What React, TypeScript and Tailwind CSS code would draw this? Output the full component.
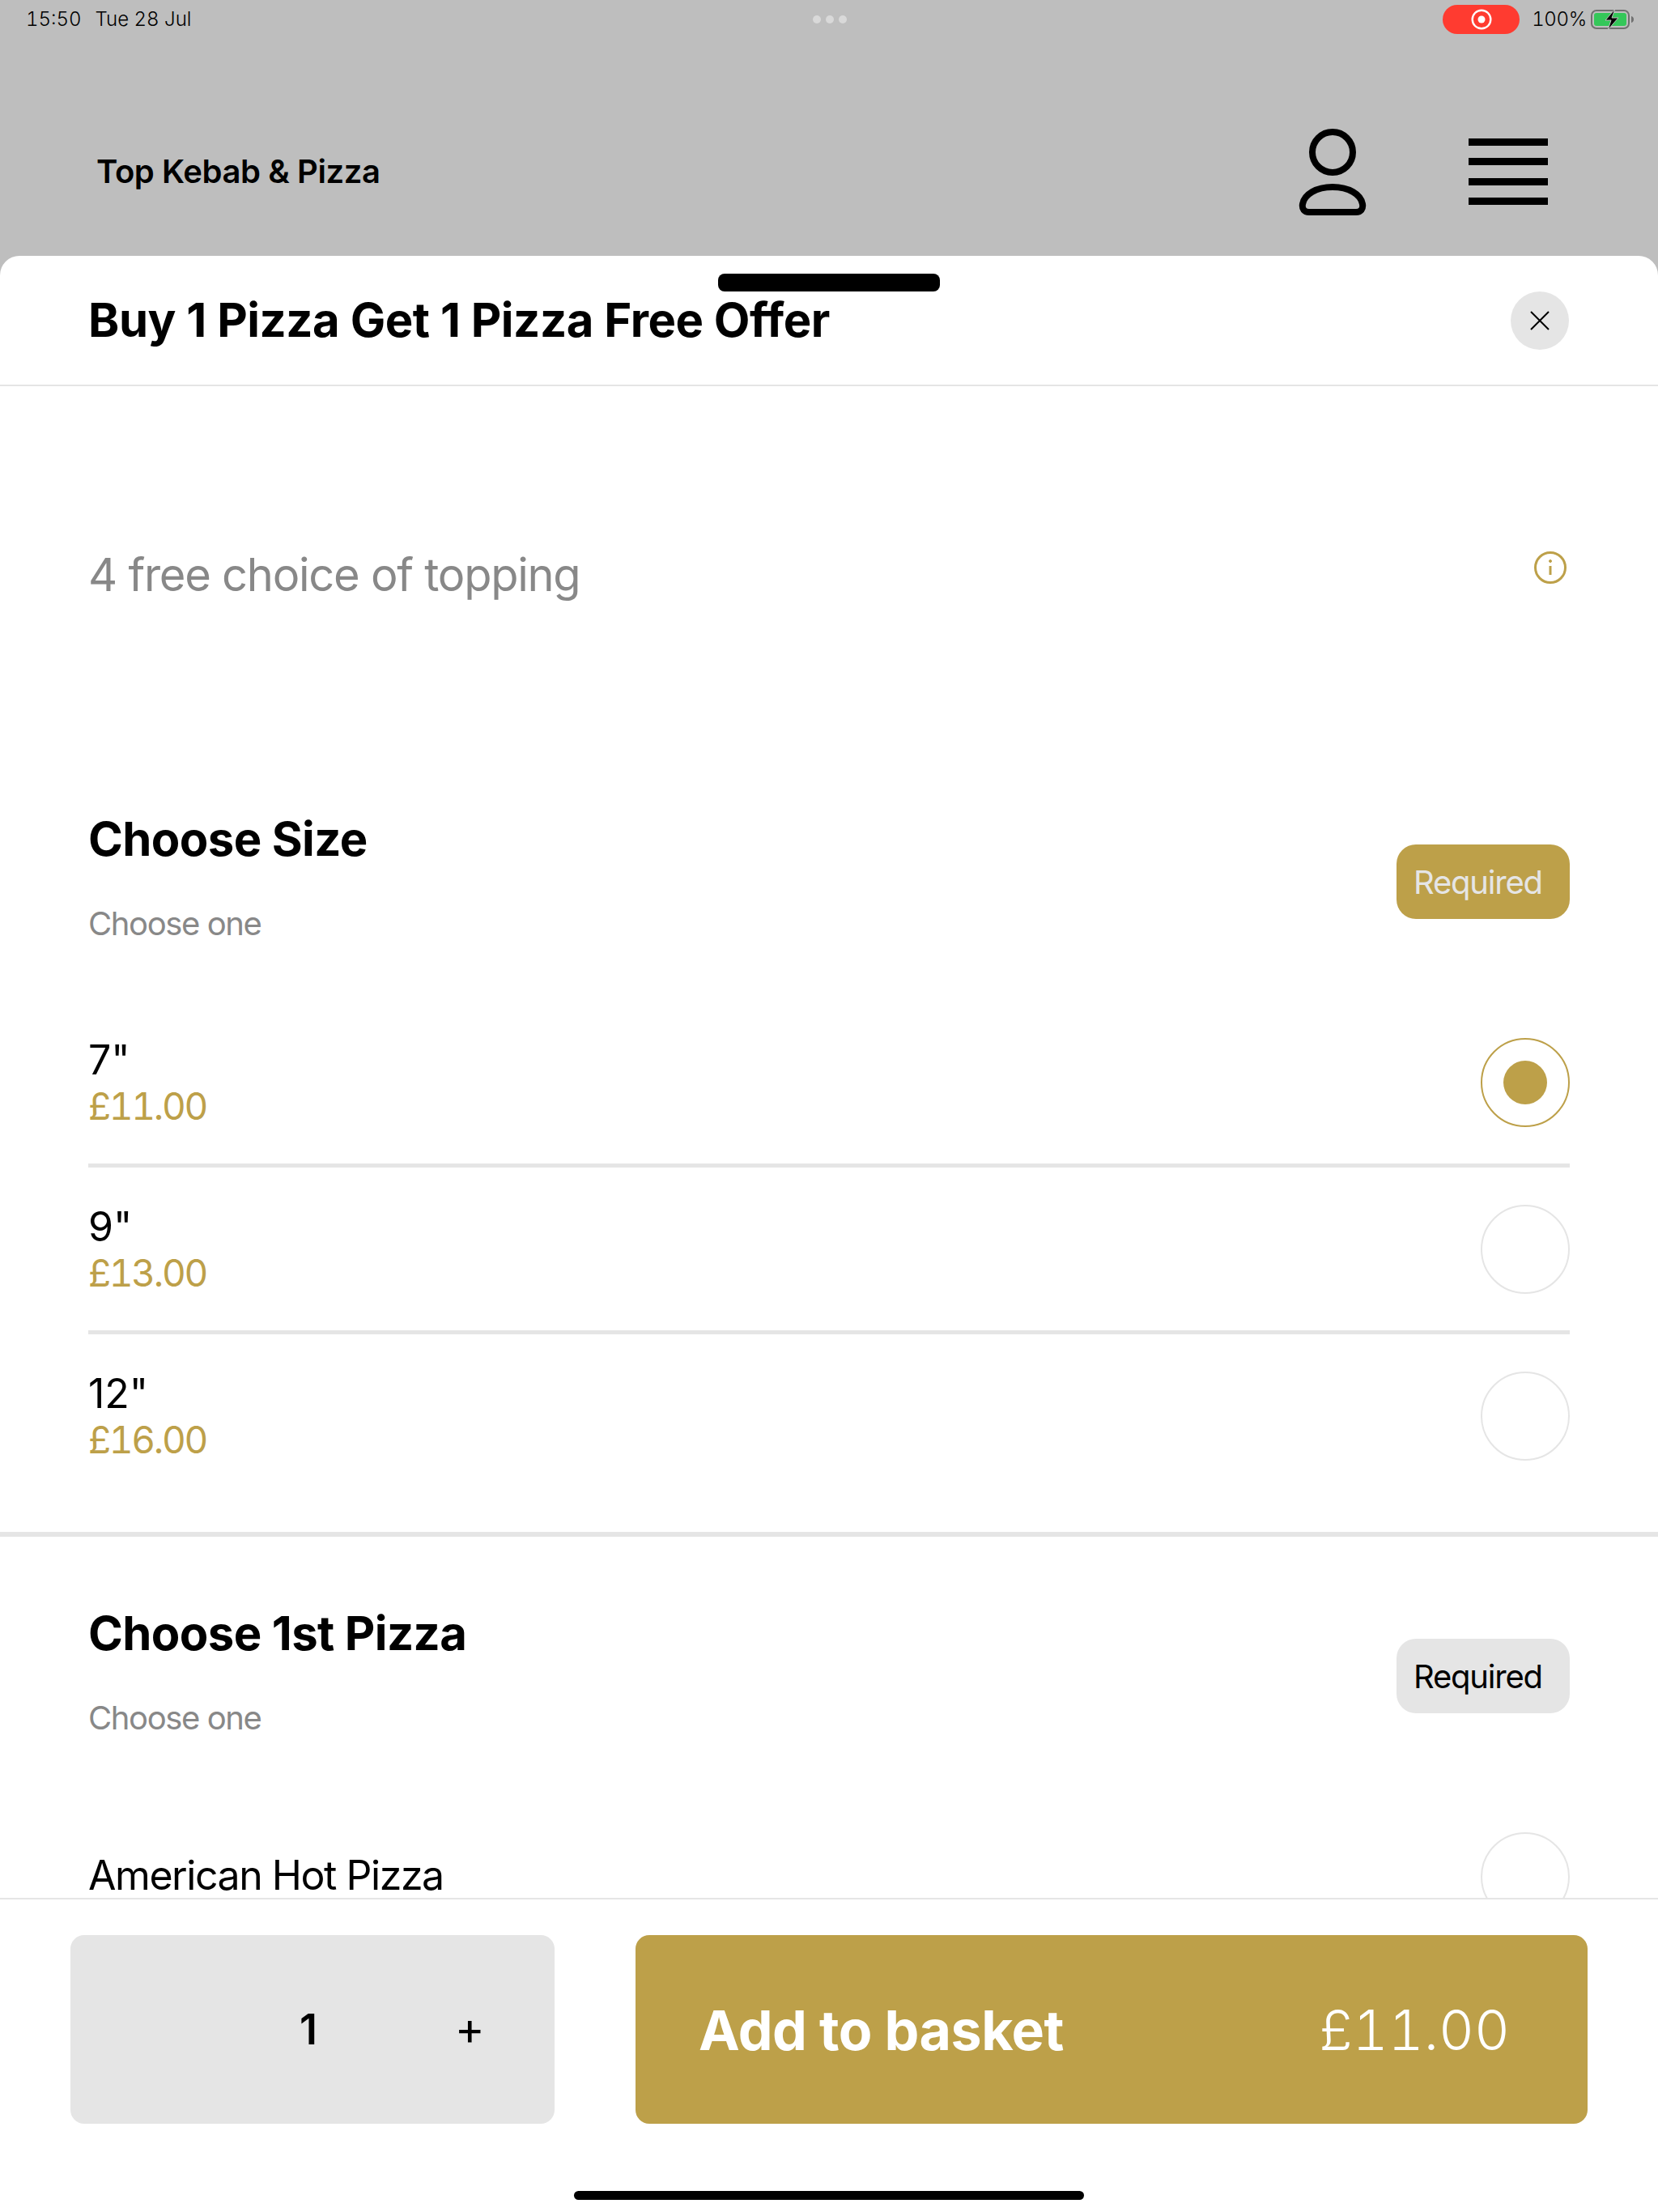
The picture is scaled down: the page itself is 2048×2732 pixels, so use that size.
import React from 'react';

const GOLD = '#bda049';

const StatusBar = () => (
  <div className="flex h-[48px] items-center pl-[32px] pr-[30px] text-[24px] font-light leading-[48px] text-black tabular-nums">
    <div className="flex flex-1 gap-[17px]">
      <span>15:50</span>
      <span>Tue 28 Jul</span>
    </div>
    <div className="flex gap-[6px]">
      <span className="h-[10px] w-[10px] rounded-full bg-[#d9d9d9]"></span>
      <span className="h-[10px] w-[10px] rounded-full bg-[#d9d9d9]"></span>
      <span className="h-[10px] w-[10px] rounded-full bg-[#d9d9d9]"></span>
    </div>
    <div className="flex flex-1 items-center justify-end">
      <div className="mr-[15px] flex h-[36px] w-[95px] items-center justify-center rounded-full bg-[#ff3b30]">
        <svg width="26" height="26" viewBox="0 0 26 26">
          <circle cx="13" cy="13" r="11.300" fill="none" stroke="#fff" strokeWidth="2.400" />
          <circle cx="13" cy="13" r="4.500" fill="#fff" />
        </svg>
      </div>
      <span className="mr-[5px] tracking-[-0.3px]">100%</span>
      <svg width="53" height="26" viewBox="0 0 53 26">
        <rect x="1" y="2" width="46" height="22" rx="6" fill="none" stroke="#707070" strokeWidth="2" />
        <rect x="4" y="5" width="40" height="16" rx="3" fill="#34c759" />
        <path d="M50 9c2 .5 3 2 3 4s-1 3.500-3 4z" fill="#707070" />
        <path d="M30 0 18 14h7l-4 12 13-15h-8z" fill="#000" stroke="#bebebe" strokeWidth="1" />
      </svg>
    </div>
  </div>
);

const ProfileIcon = () => (
  <svg width="84" height="107" viewBox="0 0 84 107" fill="none" stroke="#000" strokeWidth="8">
    <circle cx="42" cy="29" r="25" />
    <path d="M42 72c-20 0-35 9-37 21-1 6 2 10 8 10h58c6 0 9-4 8-10-2-12-17-21-37-21z" />
  </svg>
);

const MenuIcon = () => (
  <div className="flex w-[98px] flex-col gap-[15.500px]">
    <span className="h-[9px] bg-black"></span>
    <span className="h-[9px] bg-black"></span>
    <span className="h-[9px] bg-black"></span>
    <span className="h-[9px] bg-black"></span>
  </div>
);

const SectionHeader = ({ title, active }: { title: string; active: boolean }) => (
  <div className="flex items-start justify-between">
    <div>
      <h2 className="text-[58px] font-bold leading-[70px] tracking-[-0.6px] text-black">{title}</h2>
      <p className="mt-[45px] text-[40px] leading-[50px] tracking-[-1.4px] text-[#888888]">Choose one</p>
    </div>
    <span
      className={
        active
          ? 'mt-[42px] flex h-[92px] w-[214px] items-center pl-[21px] pt-[2px] text-[40px] tracking-[-1.2px] rounded-[24px] bg-[#bda049] text-[#e5e5e5]'
          : 'mt-[42px] flex h-[92px] w-[214px] items-center pl-[21px] pt-[2px] text-[40px] tracking-[-1.2px] rounded-[24px] bg-[#e5e5e5] text-black'
      }
    >
      Required
    </span>
  </div>
);

const Radio = ({ checked }: { checked?: boolean }) => (
  <span
    className={
      checked
        ? 'flex h-[110px] w-[110px] items-center justify-center rounded-full border-2 border-[#bda049]'
        : 'flex h-[110px] w-[110px] items-center justify-center rounded-full border-2 border-[#e5e5e5]'
    }
  >
    {checked && <span className="h-[54px] w-[54px] rounded-full bg-[#bda049]"></span>}
  </span>
);

const SizeRow = ({ label, price, checked, last }: { label: string; price: string; checked?: boolean; last?: boolean }) => (
  <div className={last ? 'flex h-[201px] items-center justify-between' : 'box-content flex h-[201px] items-center justify-between border-b-[5px] border-[#e5e5e5]'}>
    <div className="pt-[4px]">
      <div className="text-[50px] leading-[55px] text-black">{label}</div>
      <div className="text-[46px] leading-[58px] tracking-[-2.3px] text-[#bda049] tabular-nums">{price}</div>
    </div>
    <Radio checked={checked} />
  </div>
);

export default function App() {
  return (
    <div
      className="relative flex h-[2732px] w-[2048px] flex-col overflow-hidden bg-[#bebebe]"
      style={{ fontFamily: 'Inter, "Liberation Sans", sans-serif' }}
    >
      <div className="flex h-[316px] flex-col">
        <StatusBar />
        <div className="flex flex-1 items-center justify-between pl-[119px] pr-[136px] pt-[60px]">
          <span className="text-[40px] font-semibold tracking-[-0.4px] text-black">Top Kebab &amp; Pizza</span>
          <div className="flex items-center gap-[126px]">
            <ProfileIcon />
            <MenuIcon />
          </div>
        </div>
      </div>

      <div className="flex min-h-0 flex-1 flex-col rounded-t-[24px] bg-white">
        <div className="flex h-[161px] items-center justify-between border-b-2 border-[#e5e5e5] pl-[109px] pr-[110px]">
          <h1 className="-mt-[2px] text-[58px] font-bold leading-[70px] tracking-[-0.45px] text-black">Buy 1 Pizza Get 1 Pizza Free Offer</h1>
          <button className="flex h-[72px] w-[72px] items-center justify-center rounded-full bg-[#e5e5e5]">
            <svg width="24" height="24" viewBox="0 0 24 24" fill="none" stroke="#000" strokeWidth="2">
              <path d="M1 1l22 22M23 1 1 23" />
            </svg>
          </button>
        </div>

        <div className="min-h-0 flex-1 overflow-hidden">
          <div className="flex h-[440px] items-start justify-between pl-[109px] pr-[113px] pt-[198px]">
            <p className="text-[56px] leading-[70px] tracking-[-1.25px] text-[#888888]">4 free choice of topping</p>
            <svg className="mt-[6px]" width="40" height="40" viewBox="0 0 40 40" fill="none" stroke={GOLD} strokeWidth="3">
              <circle cx="20" cy="20" r="18.500" />
              <path d="M20 18v11" />
              <circle cx="20" cy="12" r="1.500" fill={GOLD} strokeWidth="1" />
            </svg>
          </div>

          <section className="border-b-[6px] border-[#e5e5e5] pb-[43px] pt-[84px]">
            <div className="pl-[109px] pr-[109px]">
              <SectionHeader title="Choose Size" active />
              <div className="mt-[70px]">
                <SizeRow label={'7"'} price="£11.00" checked />
                <SizeRow label={'9"'} price="£13.00" />
                <SizeRow label={'12"'} price="£16.00" last />
              </div>
            </div>
          </section>

          <section className="pt-[84px]">
            <div className="pl-[109px] pr-[109px]">
              <SectionHeader title="Choose 1st Pizza" active={false} />
              <div className="mt-[70px] flex h-[201px] items-center justify-between">
                <span className="-mt-[4px] text-[50px] leading-[50px] tracking-[-1.45px] text-black">American Hot Pizza</span>
                <Radio />
              </div>
            </div>
          </section>
        </div>

        <div className="flex h-[388px] gap-[100px] border-t-2 border-[#e5e5e5] bg-white pl-[87px] pr-[87px] pt-[44px]">
          <div className="grid h-[233px] w-[598px] grid-cols-3 items-center justify-items-center rounded-[17px] bg-[#e5e5e5] pr-[6px] text-black">
            <span></span>
            <span className="pr-[4px] text-[52px] font-semibold">1</span>
            <span className="pb-[4px] text-[56px]">+</span>
          </div>
          <button className="flex h-[233px] flex-1 items-center justify-between rounded-[17px] bg-[#bda049] pl-[78px] pr-[96px] text-[68px] text-white">
            <span className="font-bold tracking-[-0.5px]">Add to basket</span>
            <span className="font-light tabular-nums">£11.00</span>
          </button>
        </div>
      </div>

      <div className="absolute left-[887px] top-[338px] h-[22px] w-[274px] rounded-[8px] bg-black"></div>
      <div className="absolute bottom-[15px] left-[709px] h-[11px] w-[630px] rounded-full bg-black"></div>
    </div>
  );
}
